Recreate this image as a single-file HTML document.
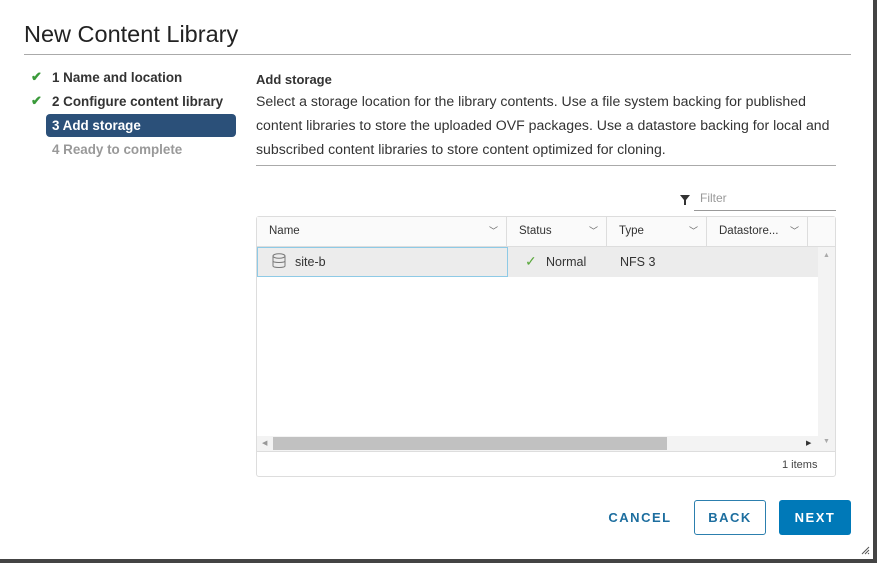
<!DOCTYPE html>
<html><head><style>
*{box-sizing:border-box;margin:0;padding:0}
body{width:877px;height:563px;background:#fff;font-family:"Liberation Sans",sans-serif;position:relative;overflow:hidden;color:#313131}
.a{position:absolute}
.step{position:absolute;left:52px;font-size:13.4px;font-weight:bold;color:#333}
.chk{position:absolute;left:31px;color:#3a9a3a;font-size:13px;font-weight:bold}
.p{position:absolute;left:256px;font-size:14.1px;color:#333}
.hd{position:absolute;top:216px;height:31px;font-size:11.5px;color:#333;line-height:30px;border-right:1px solid #ddd;padding-left:12px}
.car{position:absolute;right:8px;top:0;font-size:9px;color:#666}
.btn{position:absolute;top:500px;height:35px;font-size:13px;font-weight:bold;letter-spacing:1.5px;text-align:center;line-height:35px;border-radius:3px}
</style></head><body>
<div class="a" style="left:24px;top:21px;font-size:23.5px;color:#222">New Content Library</div>
<div class="a" style="left:24px;top:54px;width:827px;height:1px;background:#aaa"></div>
<div class="chk" style="top:69px">✔</div>
<div class="step" style="top:70px">1 Name and location</div>
<div class="chk" style="top:93px">✔</div>
<div class="step" style="top:94px">2 Configure content library</div>
<div class="a" style="left:46px;top:114px;width:190px;height:23px;background:#2b5079;border-radius:4px"></div>
<div class="step" style="top:118px;color:#fff">3 Add storage</div>
<div class="step" style="top:142px;color:#999">4 Ready to complete</div>
<div class="p" style="top:72px;font-weight:bold;font-size:13px">Add storage</div>
<div class="p" style="top:93px">Select a storage location for the library contents. Use a file system backing for published</div>
<div class="p" style="top:117px">content libraries to store the uploaded OVF packages. Use a datastore backing for local and</div>
<div class="p" style="top:141px">subscribed content libraries to store content optimized for cloning.</div>
<div class="a" style="left:256px;top:165px;width:580px;height:1px;background:#aaa"></div>
<svg class="a" style="left:680px;top:195px" width="10" height="10"><path d="M0 0H10L6 5V10H4V5Z" fill="#333"/></svg>
<div class="a" style="left:700px;top:191px;font-size:12px;color:#999">Filter</div>
<div class="a" style="left:694px;top:210px;width:142px;height:1px;background:#999"></div>
<div class="a" style="left:256px;top:216px;width:580px;height:261px;border:1px solid #ddd;border-radius:3px"></div>
<div class="a" style="left:257px;top:217px;width:578px;height:30px;background:#fafafa;border-bottom:1px solid #ddd"></div>
<div class="hd" style="left:257px;width:250px">Name<span class="car">﹀</span></div>
<div class="hd" style="left:507px;width:100px">Status<span class="car">﹀</span></div>
<div class="hd" style="left:607px;width:100px">Type<span class="car">﹀</span></div>
<div class="hd" style="left:707px;width:101px">Datastore...<span class="car">﹀</span></div>
<div class="a" style="left:257px;top:247px;width:561px;height:30px;background:#ececec"></div>
<div class="a" style="left:257px;top:247px;width:251px;height:30px;border:1px solid #8ecae6"></div>
<svg class="a" style="left:272px;top:253px" width="14" height="16"><ellipse cx="7" cy="3" rx="6" ry="2.3" fill="none" stroke="#777"/><path d="M1 3V13C1 15 13 15 13 13V3M1 8C1 10 13 10 13 8" fill="none" stroke="#777"/></svg>
<div class="a" style="left:295px;top:255px;font-size:12.5px;color:#333">site-b</div>
<div class="a" style="left:525px;top:253px;font-size:14px;color:#5aa83c">✓</div>
<div class="a" style="left:546px;top:255px;font-size:12.5px;color:#333">Normal</div>
<div class="a" style="left:620px;top:255px;font-size:12.5px;color:#333">NFS 3</div>
<div class="a" style="left:818px;top:247px;width:17px;height:204px;background:#f3f3f3"></div>
<div class="a" style="left:823px;top:252px;font-size:7px;color:#aaa">▲</div>
<div class="a" style="left:823px;top:438px;font-size:7px;color:#aaa">▼</div>
<div class="a" style="left:257px;top:436px;width:561px;height:15px;background:#f3f3f3"></div>
<div class="a" style="left:273px;top:437px;width:394px;height:13px;background:#c1c1c1"></div>
<div class="a" style="left:262px;top:439px;font-size:7px;color:#999">◀</div>
<div class="a" style="left:806px;top:439px;font-size:7px;color:#333">▶</div>
<div class="a" style="left:257px;top:451px;width:578px;height:1px;background:#ddd"></div>
<div class="a" style="left:782px;top:459px;font-size:11px;color:#444">1 items</div>
<div class="btn" style="left:601px;width:78px;color:#1d6e9f">CANCEL</div>
<div class="btn" style="left:694px;width:72px;border:1px solid #2c7fae;color:#1d6e9f;line-height:33px">BACK</div>
<div class="btn" style="left:779px;width:72px;background:#0079b8;color:#fff">NEXT</div>
<div class="a" style="left:0;top:559px;width:877px;height:4px;background:#444"></div>
<div class="a" style="left:873px;top:0;width:4px;height:563px;background:#444"></div>
<svg class="a" style="left:861px;top:546px" width="9" height="9"><path d="M8 1L1 8M8 4L4 8M8 7L7 8" stroke="#555"/></svg>
</body></html>
